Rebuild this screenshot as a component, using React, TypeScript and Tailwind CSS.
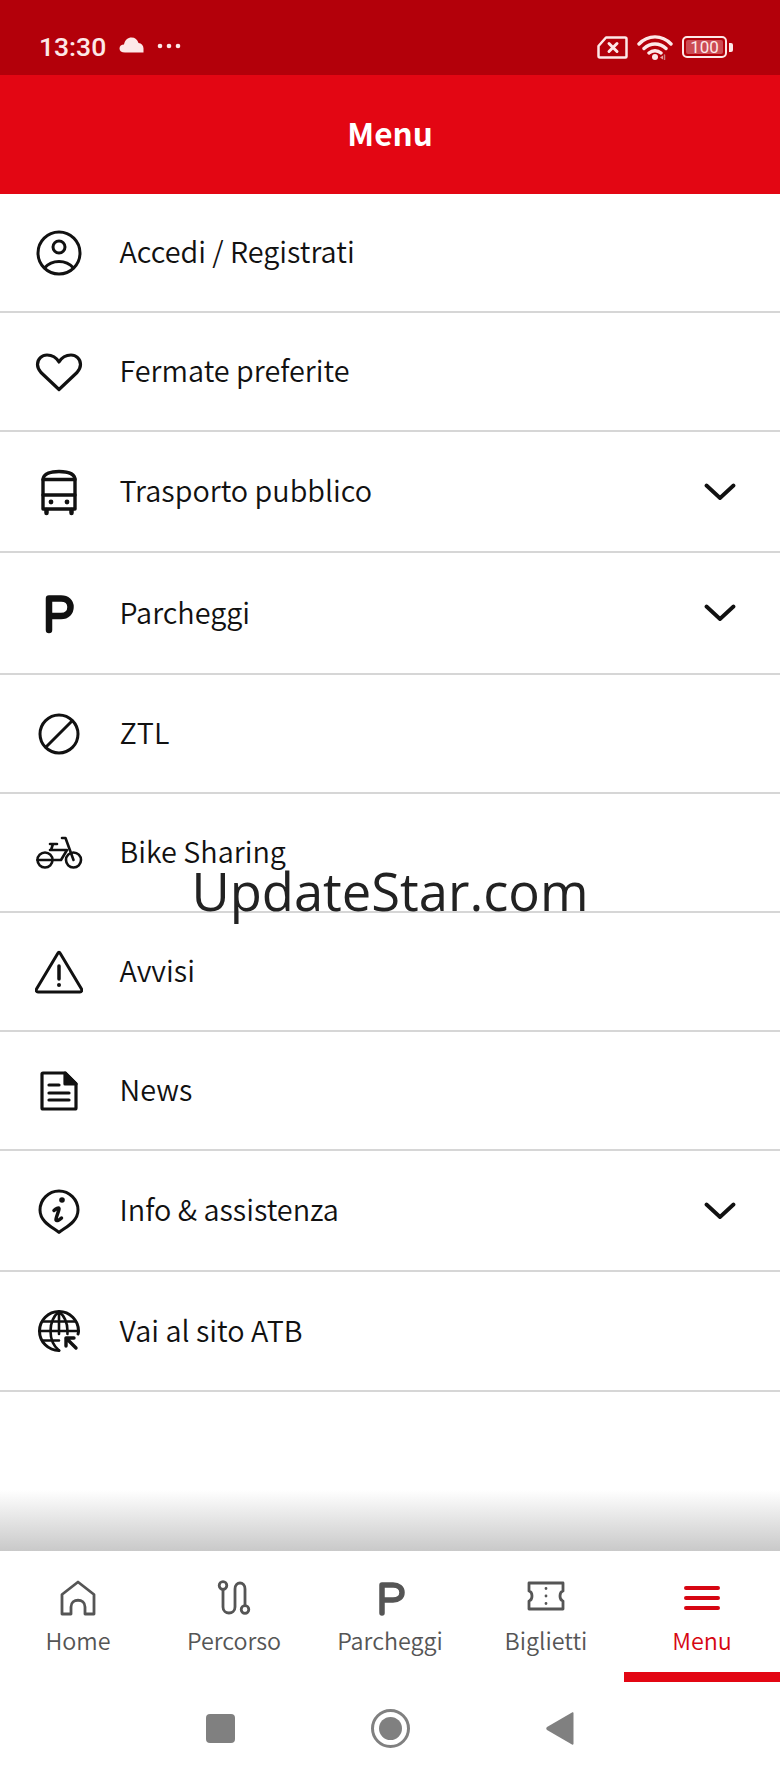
import React from "react";

const S = { fill: "none", stroke: "currentColor", strokeLinecap: "round" as const, strokeLinejoin: "round" as const };

const Box = ({ children, sw = 3 }: { children: React.ReactNode; sw?: number }) => (
  <svg width="48" height="48" viewBox="0 0 48 48" strokeWidth={sw} {...S}>{children}</svg>
);

const IPerson = () => (
  <Box><circle cx="24" cy="24" r="21" /><circle cx="24" cy="18" r="6" /><path d="M9.500 39c4-4.500 9-6.500 14.500-6.500S34.500 34.500 38.500 39" /></Box>
);
const IHeart = () => (
  <Box sw={3.2}><path d="M24 41.500 6 24.500C3.500 21.500 2.500 19.500 2.500 16.500 2.500 11 7 7 12 7c4.500 0 9 2 12 7 3-5 7.500-7 12-7 5 0 9.500 4 9.500 9.500 0 3-1 5-3.500 8z" /></Box>
);
const IBus = () => (
  <Box sw={3.4}>
    <path d="M8 12c0-7 9-8.500 16-8.500S40 5 40 12v29H8z" />
    <path d="M8 11.500h32M8 27h32" />
    <circle cx="16" cy="34" r="2.400" fill="currentColor" stroke="none" />
    <circle cx="32" cy="34" r="2.400" fill="currentColor" stroke="none" />
    <path d="M11.500 42v3M36.500 42v3" strokeWidth="4.500" />
  </Box>
);
const IP = () => (
  <Box sw={6.5}><path d="M14 41V9.500h12c6 0 9.500 3.500 9.500 8.500S32 27 26 27H14" /></Box>
);
const IBan = () => (
  <Box><circle cx="24" cy="24" r="19" /><path d="M11 37 37 11" /></Box>
);
const IBike = () => (
  <Box sw={2.6}>
    <circle cx="10" cy="31" r="7.500" /><circle cx="38.500" cy="31" r="7.500" />
    <path d="M2.500 31H26l6-10H15M15 15h7M18 15l-2 6M27 9h3.500L38.500 31" />
  </Box>
);
const IWarn = () => (
  <Box>
    <path d="M23 5 1.500 41c-.8 1.500 0 3 1.500 3h42c1.500 0 2.300-1.500 1.500-3L25 5c-.5-1-1.500-1-2 0z" />
    <path d="M24 18v13" strokeWidth="3.500" />
    <circle cx="24" cy="37" r="2" fill="currentColor" stroke="none" />
  </Box>
);
const INews = () => (
  <Box sw={3.2}>
    <path d="M8 6h22l11 11v24c0 .500-.5 1-1 1H8c-.5 0-1-.5-1-1V7c0-.5.5-1 1-1z" />
    <path d="M30 6l11 11H30z" fill="currentColor" />
    <path d="M14 18h10M14 26h20M14 33h20" />
  </Box>
);
const IInfo = () => (
  <Box>
    <path d="M24 45.500C19 41 5 35.500 5 23a19 19 0 0 1 38 0C43 35.500 29 41 24 45.500z" />
    <circle cx="27" cy="13" r="2.800" fill="currentColor" stroke="none" />
    <path d="M19 23.500c2-2 4.500-3 5-2 .5 1.500-3.500 9.500-3 11.500.5 1.500 3.500 0 5.500-2" strokeWidth="3.500" />
  </Box>
);
const IGlobe = () => (
  <Box>
    <path d="M43 27c.5-1 .5-2 .5-3A19.500 19.500 0 1 0 24 43.500" />
    <path d="M24 4.500c-6 5-8.500 12-8.500 19.500S18 38.500 24 43.500M24 4.500c6 5 8.500 12 8.500 19.500 0 1 0 2-.1 3M4.500 24h39M7 14.500h34M7 33.500h17M24 4.500V27" strokeWidth="2.600" />
    <path d="M31 31l10 10M31 39v-8h8" strokeWidth="3.400" />
  </Box>
);
const Chevron = () => (
  <svg width="32" height="18" viewBox="0 0 32 18" strokeWidth="3.800" {...S}><path d="M2.500 2.500 16 15 29.500 2.500" /></svg>
);

const rows: { label: string; h: string; icon: React.ReactNode; chev?: boolean }[] = [
  { label: "Accedi / Registrati", h: "h-[119px]", icon: <IPerson /> },
  { label: "Fermate preferite", h: "h-[119px]", icon: <IHeart /> },
  { label: "Trasporto pubblico", h: "h-[121px]", icon: <IBus />, chev: true },
  { label: "Parcheggi", h: "h-[122px]", icon: <IP />, chev: true },
  { label: "ZTL", h: "h-[119px]", icon: <IBan /> },
  { label: "Bike Sharing", h: "h-[119px]", icon: <IBike /> },
  { label: "Avvisi", h: "h-[119px]", icon: <IWarn /> },
  { label: "News", h: "h-[119px]", icon: <INews /> },
  { label: "Info & assistenza", h: "h-[121px]", icon: <IInfo />, chev: true },
  { label: "Vai al sito ATB", h: "h-[120px]", icon: <IGlobe /> },
];

const Tab = ({ label, icon, active }: { label: string; icon: React.ReactNode; active?: boolean }) => (
  <div className={`flex flex-col items-center h-[131px] pt-[26px] ${active ? "text-[#d60612] border-b-[10px] border-[#e30613]" : "text-[#555555]"}`}>
    <div className="h-[42px] flex items-center justify-center">{icon}</div>
    <div className="text-[23.3px] font-[350] leading-[36px] mt-[3px]">{label}</div>
  </div>
);

export default function App() {
  return (
    <div className="relative flex flex-col h-[1776px] w-[780px] bg-white overflow-hidden text-[#111111] font-['Noto_Sans_CJK_SC',sans-serif]">
      <div className="h-[75px] bg-[#b3000a] flex items-center justify-between pl-[39px] pr-[47px] text-[#fde8e8] shrink-0 pt-[19px]">
        <div className="flex items-center">
          <span className="font-['Roboto',sans-serif] text-[26.5px] leading-none font-medium">13:30</span>
          <svg width="25" height="16" viewBox="0 0 25 16" className="ml-[13px] mb-[5px]" fill="currentColor"><path d="M6 15.500C2.500 15.500.5 14 .5 11.500.5 9 2.500 7.500 5 7.500 5.800 3 9 .5 12.500.5c3.500 0 6 2 7 5.500 3 .3 5 2.500 5 5.500v4z" /></svg>
          <svg width="24" height="6" viewBox="0 0 24 6" className="ml-[13px] mb-[2px]" fill="currentColor"><circle cx="3" cy="3" r="2.300" /><circle cx="12" cy="3" r="2.300" /><circle cx="21" cy="3" r="2.300" /></svg>
        </div>
        <div className="flex items-center">
          <svg width="31" height="23" viewBox="0 0 31 23" fill="none" stroke="currentColor" strokeWidth="2.500" strokeLinejoin="round" strokeLinecap="round"><path d="M9 1.500h19c1 0 1.500.5 1.500 1.500v17.500c0 .7-.5 1-1 1H3c-1 0-1.500-.5-1.500-1.500V10z" /><path d="M12 7.500l8 8M20 7.500l-8 8" strokeWidth="3" /></svg>
          <svg width="36" height="25" viewBox="0 0 36 25" className="ml-[9px]" fill="none" stroke="currentColor" strokeWidth="3.400" strokeLinecap="round"><path d="M2 9C11 -.5 25 -.5 34 9M7 13.500c6.500-6 15.500-6 22 0M12 18c3.500-3 8.500-3 12 0" /><circle cx="18" cy="22" r="3" fill="currentColor" stroke="none" /><path d="M26 20.500v4l-3-2z" fill="#e8a0a0" stroke="none" /><path d="M27.500 20v4.500" stroke="#c98080" strokeWidth="1.500" /></svg>
          <div className="ml-[9px] w-[45px] h-[22px] border-[2.500px] border-current rounded-[5px] p-[2px] flex">
            <div className="flex-1 bg-[#cc4b53] rounded-[2px] flex items-center justify-center font-['Roboto',sans-serif] text-[17px] leading-none">100</div>
          </div>
          <div className="ml-[2px] w-[4px] h-[9px] bg-current rounded-r-[2px]" />
        </div>
      </div>

      <div className="h-[119px] bg-[#e30613] flex items-center justify-center shrink-0">
        <span className="text-white font-bold text-[31.5px] leading-[40px] mb-[5px]">Menu</span>
      </div>

      <div className="flex-1 min-h-0 flex flex-col">
        {rows.map((r) => (
          <div key={r.label} className={`${r.h} shrink-0 flex items-center border-b-2 border-[#d6d6d6] pl-[35px] pr-[44px]`}>
            <div className="w-[48px] h-[48px] shrink-0">{r.icon}</div>
            <div className="ml-[36.5px] flex-1 text-[28.8px] font-[350] leading-[40px] mb-[3px]">{r.label}</div>
            {r.chev && <Chevron />}
          </div>
        ))}
        <div className="flex-1" />
        <div className="h-[61px] shrink-0 bg-gradient-to-b from-white to-[#c9c9c9]" />
      </div>

      <div className="grid grid-cols-5 shrink-0 h-[131px]">
        <Tab label="Home" icon={
          <svg width="36" height="36" viewBox="0 0 36 36" strokeWidth="2.800" {...S}><path d="M2 34V14.500L18 2l16 12.500V34h-9v-7c0-9-14-9-14 0v7z" /></svg>
        } />
        <Tab label="Percorso" icon={
          <svg width="36" height="36" viewBox="0 0 36 36" strokeWidth="2.800" {...S}><circle cx="7" cy="5.500" r="3.800" /><circle cx="29" cy="29.500" r="3.800" /><path d="M7 9.500V27c0 8 12 8 12 0V9c0-8 10-8 10 0v16.500" /></svg>
        } />
        <Tab label="Parcheggi" icon={
          <svg width="36" height="36" viewBox="0 0 36 36" strokeWidth="5.500" {...S}><path d="M10 33V5h11c5.500 0 9 3 9 7.500S26.500 20 21 20H10" /></svg>
        } />
        <Tab label="Biglietti" icon={
          <svg width="38" height="30" viewBox="0 0 38 30" strokeWidth="2.800" {...S} className="mb-[4px]"><path d="M2 2h34v8c-4 1-4 9 0 10v8H2v-8c4-1 4-9 0-10z" /><path d="M19 7.500v.1M19 15v.1M19 22.500v.1" strokeWidth="2.800" /></svg>
        } />
        <Tab active label="Menu" icon={
          <svg width="36" height="26" viewBox="0 0 36 26" strokeWidth="4" {...S}><path d="M2 3h32M2 13h32M2 23h32" /></svg>
        } />
      </div>

      <div className="h-[94px] shrink-0 flex items-center justify-center gap-[136px] pb-[2px] pr-[1px]">
        <div className="w-[29px] h-[29px] rounded-[4px] bg-[#808080]" />
        <div className="w-[39px] h-[39px] rounded-full border-[3.500px] border-[#808080] flex items-center justify-center">
          <div className="w-[23px] h-[23px] rounded-full bg-[#808080]" />
        </div>
        <svg width="28" height="33" viewBox="0 0 28 33" fill="#808080"><path d="M26 .5c1-.5 1.500 0 1.500 1v30c0 1-.5 1.500-1.500 1L1 18c-1-1-1-2 0-3z" /></svg>
      </div>

      <div className="absolute left-0 right-0 top-[856px] text-center text-[#222222] font-['Open_Sans',sans-serif] text-[52.5px] leading-[70px]">UpdateStar.com</div>
    </div>
  );
}
